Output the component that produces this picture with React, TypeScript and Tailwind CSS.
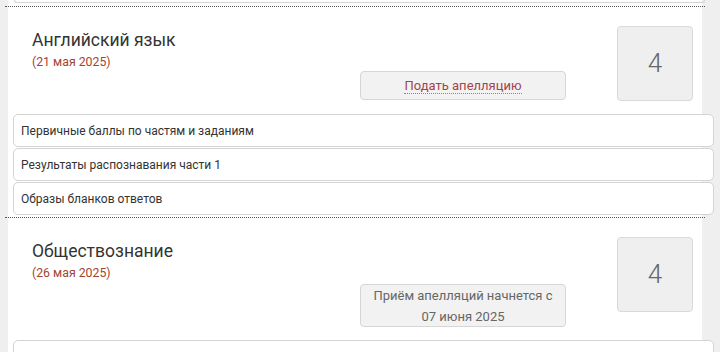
import React from "react";

type Exam = {
  subject: string;
  date: string;
  score: number;
  appeal: string | null;
  appealNote?: string[];
  rows: string[];
};

const exams: Exam[] = [
  {
    subject: "Английский язык",
    date: "(21 мая 2025)",
    score: 4,
    appeal: "Подать апелляцию",
    rows: ["Первичные баллы по частям и заданиям", "Результаты распознавания части 1", "Образы бланков ответов"],
  },
  {
    subject: "Обществознание",
    date: "(26 мая 2025)",
    score: 4,
    appeal: null,
    appealNote: ["Приём апелляций начнется с", "07 июня 2025"],
    rows: [""],
  },
];

function ExamCard({ exam }: { exam: Exam }) {
  return (
    <div className="-mx-[3px] border-t border-dotted border-[#555]">
      <div className="mx-[3px]">
        <div className="flex items-start pl-[24px] pr-[9px] pt-[19px] pb-[13px]">
          <div className="flex-1 pt-[2px]">
            <div className="text-[17.5px] leading-[24px] text-[#333]">{exam.subject}</div>
            <div className="mt-[2px] text-[12.3px] leading-[16px] text-[#a4442f]">{exam.date}</div>
          </div>
          {exam.appeal ? (
            <button className="mt-[45px] w-[206px] h-[29px] rounded-[4px] border border-[#d6d6d6] bg-[#f2f2f2] text-[13px] text-[#a4444a]">
              <span className="border-b border-dotted border-[#888] leading-[15px] inline-block">{exam.appeal}</span>
            </button>
          ) : (
            <div className="mt-[47px] w-[206px] h-[43px] rounded-[4px] border border-[#d6d6d6] bg-[#f2f2f2] text-[13px] leading-[21px] text-[#666] text-center">
              {exam.appealNote!.map((l, i) => <div key={i}>{l}</div>)}
            </div>
          )}
          <div className="ml-[51px] w-[76px] h-[75px] rounded-[4px] border border-[#d9d9d9] bg-[#efefef] flex items-center justify-center text-[26px] font-light text-[#666]">
            {exam.score}
          </div>
        </div>
        <div className="ml-[5px] -mr-[12px]">
          {exam.rows.map((r, i) => (
            <div key={i} className="h-[33px] mb-[1px] flex items-center px-[7px] rounded-[5px] border border-[#d4d4d4] bg-white text-[12px] text-[#333]">
              {r}
            </div>
          ))}
        </div>
      </div>
    </div>
  );
}

export default function App() {
  return (
    <div className="w-[720px] h-[352px] overflow-hidden bg-[#efefef] flex" style={{ fontFamily: "Roboto, 'Noto Sans', sans-serif" }}>
      <div className="ml-[8px] w-[694px] bg-white">
        <div className="ml-[6px] -mr-[3px] h-[3px] rounded-b-[5px] border-x border-b border-[#d4d4d4]" />
        <div className="h-[3px]" />
        {exams.map((e, i) => (
          <div key={i} className={i > 0 ? "mt-[2px]" : ""}>
            <ExamCard exam={e} />
          </div>
        ))}
      </div>
    </div>
  );
}
